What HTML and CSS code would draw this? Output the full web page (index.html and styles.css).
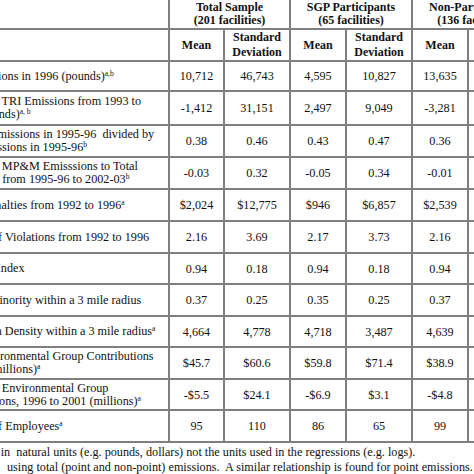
FILE: index.html
```html
<!DOCTYPE html>
<html>
<head>
<meta charset="utf-8">
<link rel="stylesheet" href="styles.css">
</head>
<body>
<div class="sheet">
  <div class="grid">
    <div class="c"></div>
    <div class="c h span2"><span>Total Sample<br>(201 facilities)</span></div>
    <div class="c h span2"><span>SGP Participants<br>(65 facilities)</span></div>
    <div class="c h span2"><span>Non-Participants<br>(136 facilities)</span></div>

    <div class="c"></div>
    <div class="c h"><span>Mean</span></div>
    <div class="c h sd"><span>Standard<br>Deviation</span></div>
    <div class="c h"><span>Mean</span></div>
    <div class="c h sd"><span>Standard<br>Deviation</span></div>
    <div class="c h"><span>Mean</span></div>
    <div class="c h sd"><span>Standard<br>Deviation</span></div>

    <div class="c l"><span>Air Emissions in 1996 (pounds)<sup>a,b</sup></span></div>
    <div class="c n"><span>10,712</span></div><div class="c n"><span>46,743</span></div><div class="c n"><span>4,595</span></div><div class="c n"><span>10,827</span></div><div class="c n"><span>13,635</span></div><div class="c n"><span>55,207</span></div>

    <div class="c l"><span>Change in TRI Emissions from 1993 to<br>1996 (pounds)<sup>a, b</sup></span></div>
    <div class="c n"><span>-1,412</span></div><div class="c n"><span>31,151</span></div><div class="c n"><span>2,497</span></div><div class="c n"><span>9,049</span></div><div class="c n"><span>-3,281</span></div><div class="c n"><span>37,521</span></div>

    <div class="c l"><span>MP&amp;M Emissions in 1995-96&nbsp; divided by<br>Total Emissions in 1995-96<sup>b</sup></span></div>
    <div class="c n"><span>0.38</span></div><div class="c n"><span>0.46</span></div><div class="c n"><span>0.43</span></div><div class="c n"><span>0.47</span></div><div class="c n"><span>0.36</span></div><div class="c n"><span>0.45</span></div>

    <div class="c l"><span>Change in MP&amp;M Emisssions to Total<br>Emissions from 1995-96 to 2002-03<sup>b</sup></span></div>
    <div class="c n"><span>-0.03</span></div><div class="c n"><span>0.32</span></div><div class="c n"><span>-0.05</span></div><div class="c n"><span>0.34</span></div><div class="c n"><span>-0.01</span></div><div class="c n"><span>0.31</span></div>

    <div class="c l"><span>Dollar Penalties from 1992 to 1996<sup>a</sup></span></div>
    <div class="c n"><span>$2,024</span></div><div class="c n"><span>$12,775</span></div><div class="c n"><span>$946</span></div><div class="c n"><span>$6,857</span></div><div class="c n"><span>$2,539</span></div><div class="c n"><span>$14,893</span></div>

    <div class="c l"><span>Number of Violations from 1992 to 1996</span></div>
    <div class="c n"><span>2.16</span></div><div class="c n"><span>3.69</span></div><div class="c n"><span>2.17</span></div><div class="c n"><span>3.73</span></div><div class="c n"><span>2.16</span></div><div class="c n"><span>3.68</span></div>

    <div class="c l"><span>Pollution Index</span></div>
    <div class="c n"><span>0.94</span></div><div class="c n"><span>0.18</span></div><div class="c n"><span>0.94</span></div><div class="c n"><span>0.18</span></div><div class="c n"><span>0.94</span></div><div class="c n"><span>0.18</span></div>

    <div class="c l"><span>Percent Minority within a 3 mile radius</span></div>
    <div class="c n"><span>0.37</span></div><div class="c n"><span>0.25</span></div><div class="c n"><span>0.35</span></div><div class="c n"><span>0.25</span></div><div class="c n"><span>0.37</span></div><div class="c n"><span>0.25</span></div>

    <div class="c l"><span>Population Density within a 3 mile radius<sup>a</sup></span></div>
    <div class="c n"><span>4,664</span></div><div class="c n"><span>4,778</span></div><div class="c n"><span>4,718</span></div><div class="c n"><span>3,487</span></div><div class="c n"><span>4,639</span></div><div class="c n"><span>5,355</span></div>

    <div class="c l"><span>Total Environmental Group Contributions<br>in 1996 (millions)<sup>a</sup></span></div>
    <div class="c n"><span>$45.7</span></div><div class="c n"><span>$60.6</span></div><div class="c n"><span>$59.8</span></div><div class="c n"><span>$71.4</span></div><div class="c n"><span>$38.9</span></div><div class="c n"><span>$53.7</span></div>

    <div class="c l"><span>Change in Environmental Group<br>Contributions, 1996 to 2001 (millions)<sup>a</sup></span></div>
    <div class="c n"><span>-$5.5</span></div><div class="c n"><span>$24.1</span></div><div class="c n"><span>-$6.9</span></div><div class="c n"><span>$3.1</span></div><div class="c n"><span>-$4.8</span></div><div class="c n"><span>$29.2</span></div>

    <div class="c l"><span>Number of Employees<sup>a</sup></span></div>
    <div class="c n"><span>95</span></div><div class="c n"><span>110</span></div><div class="c n"><span>86</span></div><div class="c n"><span>65</span></div><div class="c n"><span>99</span></div><div class="c n"><span>125</span></div>
  </div>
  <div class="notes">
    <div class="note"><sup>a</sup>Variables in&nbsp; natural units (e.g. pounds, dollars) not the units used in the regressions (e.g. logs).</div>
    <div class="note note-b"><sup>b</sup>Calculated&nbsp;&nbsp; using total (point and non-point) emissions.&nbsp; A similar relationship is found for point emissions.</div>
  </div>
</div>
</body>
</html>
```

FILE: styles.css
```css
html, body {
  margin: 0;
  padding: 0;
  overflow: hidden;
  background: #ffffff;
}

.sheet {
  margin: -3px 0 0 -60px;
  font-family: "Liberation Serif", "Times New Roman", serif;
  color: #111;
  font-size: 12.2px;
}

.grid {
  display: grid;
  width: max-content;
  grid-template-columns: 226px 53px 64px 54px 64px 54px 64px;
  grid-template-rows: 29px 30px 28px 32px 30px 30px 30px 30px 29px 30px 29px 30px 29px 30px;
  gap: 2px;
  padding: 2px;
  background: #7f7f7f;
}

.c {
  background: #ffffff;
  display: flex;
  align-items: center;
  justify-content: center;
  text-align: center;
  white-space: nowrap;
}

.span2 {
  grid-column: span 2;
}

.h {
  font-weight: bold;
  font-size: 12px;
  line-height: 13px;
}

.h.sd {
  line-height: 15px;
}

.l {
  justify-content: flex-start;
  text-align: left;
  padding-left: 7px;
  line-height: 13px;
}

.n {
  line-height: 14px;
}

sup {
  font-size: 7.5px;
  line-height: 0;
  vertical-align: 4px;
}

.notes {
  margin-top: 2px;
  padding-left: 9px;
  font-size: 12.2px;
  line-height: 15px;
  white-space: nowrap;
}

.note-b {
  margin-left: -7px;
}
```
